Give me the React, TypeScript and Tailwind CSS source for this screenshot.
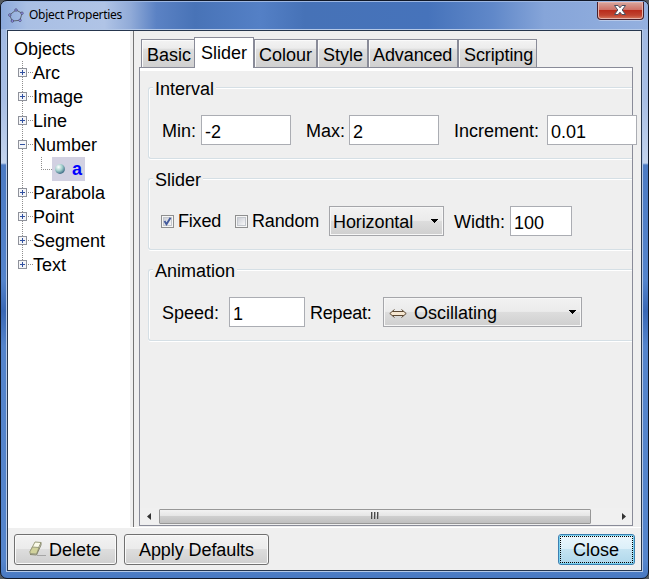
import React from "react";

type TreeItem = { name: string; open?: boolean };

const treeTop: TreeItem[] = [
  { name: "Arc" },
  { name: "Image" },
  { name: "Line" },
  { name: "Number", open: true },
];
const treeBottom: TreeItem[] = [
  { name: "Parabola" },
  { name: "Point" },
  { name: "Segment" },
  { name: "Text" },
];

function TreeLines({ open, last, nested }: { open?: boolean; last?: boolean; nested?: boolean }) {
  return (
    <svg width={nested ? 43 : 24} height="24" className="shrink-0" shapeRendering="crispEdges">
      <path d={last ? "M13.5 0V12" : "M13.5 0V24"} stroke="#8e8e8e" strokeDasharray="1 1" />
      {nested ? (
        <path d="M32.5 0V12.5H43" fill="none" stroke="#8e8e8e" strokeDasharray="1 1" />
      ) : (
        <>
          <path d="M19 11.5H24" stroke="#8e8e8e" strokeDasharray="1 1" />
          <rect x="9.5" y="7.5" width="8" height="8" rx="1" fill="#f4f5f8" stroke="#8f929b" />
          <path d="M11 11.5H16" stroke="#3050a0" />
          {!open && <path d="M13.5 9V14" stroke="#3050a0" />}
        </>
      )}
    </svg>
  );
}

function TreeRow({ item, last }: { item: TreeItem; last?: boolean }) {
  return (
    <div className="flex h-6">
      <TreeLines open={item.open} last={last} />
      <span>{item.name}</span>
    </div>
  );
}

function Tab({ label, className }: { label: string; className: string }) {
  return (
    <div
      className={`h-[28px] shrink-0 border border-b-0 border-[#898b98] bg-[linear-gradient(#f3f3f3_0%,#ececec_30%,#dedede_35%,#d0d0d0_100%)] leading-[30px] shadow-[inset_1px_1px_0_#fafafa] ${className}`}
    >
      {label}
    </div>
  );
}

function Group({ title, className, children }: { title: string; className: string; children: React.ReactNode }) {
  return (
    <section
      className={`ml-[8px] h-[72px] rounded-l-[3px] border border-r-0 border-[#d5dfe5] shadow-[inset_1px_1px_0_#fff,0_1px_0_#fff] ${className}`}
    >
      <div className="-mt-[12px] ml-[4px] h-6 w-fit bg-[#efefef] px-[2px] leading-[26px]">{title}</div>
      <div className="mt-[15px] flex h-[30px] items-center pl-px">{children}</div>
    </section>
  );
}

function Field({ value, className }: { value: string; className: string }) {
  return (
    <div className={`h-[30px] shrink-0 border border-[#abadb3] bg-white pl-[3px] leading-[32px] ${className}`}>
      {value}
    </div>
  );
}

function Label({ children, className }: { children: string; className: string }) {
  return <span className={`h-[30px] shrink-0 ${className}`}>{children}</span>;
}

function Checkbox({ checked }: { checked?: boolean }) {
  return (
    <svg width="13" height="13" className="shrink-0">
      <defs>
        <linearGradient id="check-fill" x1="0" y1="0" x2="1" y2="1">
          <stop offset="0" stopColor="#c9ccd4" />
          <stop offset="1" stopColor="#fafafa" />
        </linearGradient>
      </defs>
      <rect x=".5" y=".5" width="12" height="12" fill="#f6f6f6" stroke="#8e8f8f" />
      <rect x="2.5" y="2.5" width="8" height="8" fill="url(#check-fill)" stroke="#c3c7cd" />
      {checked && <path d="M3.5 6L5.5 9.3L9.5 2.8" fill="none" stroke="#435a9c" strokeWidth="1.9" />}
    </svg>
  );
}

function Combo({ children, className }: { children: React.ReactNode; className: string }) {
  return (
    <div
      className={`flex h-[30px] shrink-0 items-center border border-[#a5a6aa] bg-[linear-gradient(#f2f2f2_0%,#ebebeb_48%,#dddddd_50%,#cfcfcf_100%)] pt-[2px] pr-[5px] leading-[26px] shadow-[inset_0_0_0_1px_#f7f7f7] ${className}`}
    >
      {children}
      <svg width="7" height="4" className="-mt-[2px] ml-auto" shapeRendering="crispEdges">
        <path d="M0 0H7L3.5 4Z" fill="#000" />
      </svg>
    </div>
  );
}

function Button({ children, className }: { children: React.ReactNode; className: string }) {
  return (
    <button
      className={`flex h-[31px] items-center rounded-[3px] border border-[#707070] bg-[linear-gradient(#f3f3f3_0%,#ebebeb_48%,#dddddd_50%,#cfcfcf_100%)] pt-[2px] leading-[27px] shadow-[inset_0_0_0_1px_#fafafa] ${className}`}
    >
      {children}
    </button>
  );
}

function TitleBar() {
  return (
    <header className="flex h-[27px] bg-[linear-gradient(90deg,#8ba9dc_0%,#a9bfe4_4%,#b0c4e6_16%,#91abd8_20%,#5b82c4_24%,#4873b7_30%,#5480c6_40%,#4672b7_47%,#4673bb_66%,#6088c9_76%,#86a5d9_84%,#94b0df_100%)]">
      <svg width="17" height="17" viewBox="0 0 17 17" className="mt-[5px] ml-[7px] shrink-0">
        <path d="M8 3L14 6.2L12 13.3L4.3 14L1.5 8Z" fill="none" stroke="#555b68" strokeWidth=".9" />
        {[[8, 3], [14, 6.2], [12, 13.3], [4.3, 14], [1.8, 8]].map(([x, y]) => (
          <circle key={x} cx={x} cy={y} r="1.25" fill="#9b9bff" stroke="#34364e" strokeWidth=".6" />
        ))}
      </svg>
      <h1 className="ml-[4px] font-['Noto_Sans',sans-serif] text-[12px] leading-[26px] tracking-[-0.3px]">
        Object Properties
      </h1>
      <button className="mr-[4px] ml-auto flex h-[18px] w-[47px] items-center justify-center rounded-b-[4px] border border-t-0 border-[#47202b] bg-[linear-gradient(#d8a79e_0%,#cf7267_45%,#b92c1c_50%,#c04330_78%,#d77b5f_100%)] shadow-[inset_0_0_0_1px_#e6b2aa,0_1px_0_#b8c9e9]">
        <svg width="12" height="10" viewBox="0 0 12 10" className="-translate-x-px -translate-y-px">
          <path
            d="M.5 .5H4.1L6 2.8L7.9 .5H11.5L8.2 5L11.5 9.5H7.9L6 7.2L4.1 9.5H.5L3.8 5Z"
            fill="#fff"
            stroke="#484f60"
          />
        </svg>
      </button>
    </header>
  );
}

export default function App() {
  return (
    <div className="h-[579px] w-[649px] overflow-hidden bg-[#53595f] font-['Liberation_Sans',Arial,sans-serif] text-[18px] leading-6 text-black">
      <div className="h-[579px] w-[649px] overflow-hidden rounded-[7px] border border-[#101828] bg-[linear-gradient(#9db7e2_0px,#a9bfe5_100px,#c4d4ed_162px,#4d7bc3_164px,#5484cc_280px,#3a68b5_310px,#5484cc_345px,#5585cc_560px,#4777c0_579px)] pt-px">
        <TitleBar />
        <div className="mx-[5px] h-[543px] border border-[#b4c8e7]">
          <main className="flex h-full flex-col border border-[#26364e] bg-[#efefef]">
            <div className="flex h-[497px] border-b border-white">
              <aside className="flex w-[122px] shrink-0 flex-col bg-white pt-[6px] pl-px">
                <div className="pl-[5px]">Objects</div>
                {treeTop.map((item) => (
                  <TreeRow key={item.name} item={item} />
                ))}
                <div className="flex h-6">
                  <TreeLines nested />
                  <div className="flex h-6 w-[33px] items-center bg-[#d2d1e2] pl-[3px] font-bold text-[#0000ff]">
                    <svg width="10" height="10" className="-mt-px shrink-0">
                      <defs>
                        <radialGradient id="point" cx="35%" cy="30%" r="70%">
                          <stop offset="0" stopColor="#fff" />
                          <stop offset=".55" stopColor="#a3d0cd" />
                          <stop offset="1" stopColor="#46738b" />
                        </radialGradient>
                      </defs>
                      <circle cx="5" cy="5" r="4.9" fill="url(#point)" />
                    </svg>
                    <span className="ml-[7px] leading-[26px]">a</span>
                  </div>
                </div>
                {treeBottom.map((item) => (
                  <TreeRow key={item.name} item={item} last={item.name === "Text"} />
                ))}
              </aside>
              <div className="w-[4px] shrink-0 border-r border-[#747474] bg-[#efefef]" />
              <div className="flex w-[501px] shrink-0 flex-col pt-[6px] pl-[5px]">
                <nav className="flex h-[30px] items-end pl-[2px]">
                  <Tab label="Basic" className="w-[54px] pl-[5px]" />
                  <div className="z-10 -mb-px -ml-px h-[31px] w-[60px] shrink-0 border border-b-0 border-[#898b98] bg-white pl-[6px] leading-[30px]">
                    Slider
                  </div>
                  <Tab label="Colour" className="w-[63px] pl-[4px]" />
                  <Tab label="Style" className="w-[51px] pl-[5px]" />
                  <Tab label="Advanced" className="w-[90px] pl-[4px] tracking-[-0.1px]" />
                  <Tab label="Scripting" className="w-[79px] pl-[5px] tracking-[-0.1px]" />
                </nav>
                <div className="flex h-[459px] w-[494px] flex-col border border-[#898b98]">
                  <div className="h-[3px] shrink-0 bg-white" />
                  <Group title="Interval" className="mt-[16px]">
                    <Label className="ml-[12px] w-[39px] leading-[32px]">Min:</Label>
                    <Field value="-2" className="w-[90px]" />
                    <Label className="ml-[15px] w-[43px] leading-[32px]">Max:</Label>
                    <Field value="2" className="w-[90px]" />
                    <Label className="ml-[15px] w-[93px] leading-[32px]">Increment:</Label>
                    <Field value="0.01" className="w-[90px]" />
                  </Group>
                  <Group title="Slider" className="mt-[19px]">
                    <div className="w-[11px] shrink-0" />
                    <Checkbox checked />
                    <Label className="ml-[4px] w-[57px] leading-[30px] tracking-[-0.2px]">Fixed</Label>
                    <Checkbox />
                    <Label className="ml-[4px] w-[77px] leading-[30px] tracking-[-0.15px]">Random</Label>
                    <Combo className="w-[115px] pl-[3px] tracking-[-0.1px]">Horizontal</Combo>
                    <Label className="ml-[10px] w-[56px] leading-[32px]">Width:</Label>
                    <Field value="100" className="w-[62px]" />
                  </Group>
                  <Group title="Animation" className="mt-[19px]">
                    <Label className="ml-[12px] w-[67px] leading-[32px]">Speed:</Label>
                    <Field value="1" className="w-[76px]" />
                    <Label className="ml-[5px] w-[73px] leading-[32px] tracking-[-0.2px]">Repeat:</Label>
                    <Combo className="w-[199px] pl-[5px]">
                      <svg width="18" height="9" viewBox="0 0 18 9">
                        <path d="M5 .7L.8 4.5L5 8.3V6.5H13V8.3L17.2 4.5L13 .7V2.5H5Z" fill="#f5e6d0" />
                        <path
                          d="M3.5 2.5H14.5M3.5 6.5H14.5M5.5 .5L.8 4.5L5.5 8.5M12.5 .5L17.2 4.5L12.5 8.5"
                          fill="none"
                          stroke="#4a3520"
                          strokeWidth=".9"
                        />
                      </svg>
                      <span className="ml-[7px]">Oscillating</span>
                    </Combo>
                  </Group>
                  <div className="mt-auto mb-px flex h-[16px] items-center bg-[#f0f0f0]">
                    <svg width="19" height="9">
                      <path d="M11 1V8L7 4.5Z" fill="#333" />
                    </svg>
                    <div className="flex h-[15px] w-[432px] items-center justify-center rounded-[1px] border border-[#979797] bg-[linear-gradient(#f2f2f2_0%,#e5e5e5_46%,#cecece_50%,#c0c0c0_100%)]">
                      <svg width="9" height="7" className="-mt-[2px]" shapeRendering="crispEdges">
                        <path d="M.5 0V7M3.5 0V7M6.5 0V7" stroke="#4a4a4a" />
                        <path d="M1.5 0V7M4.5 0V7M7.5 0V7" stroke="#aaa" />
                      </svg>
                    </div>
                    <svg width="41" height="9">
                      <path d="M31 1V8L35 4.5Z" fill="#333" />
                    </svg>
                  </div>
                </div>
              </div>
            </div>
            <footer className="flex pt-[6px] pl-[6px]">
              <Button className="w-[103px] pl-[14px]">
                <svg width="17" height="16" viewBox="0 0 17 16" className="-mt-[3px]">
                  <path d="M6 1L12 1.5L7.5 11L1 10.5Z" fill="#fbfbea" stroke="#9b9d7c" />
                  <path d="M3.5 6L10 6.5L7.5 13L1 12.5V10.5Z" fill="#d1d29c" stroke="#9b9d7c" />
                  <path d="M12 1.5L12 4L7.5 14L1 13.5" fill="none" stroke="#85866b" />
                  <path d="M8 14.5H17" stroke="#a5a5a5" />
                </svg>
                <span className="ml-[3px]">Delete</span>
              </Button>
              <Button className="ml-[7px] w-[145px] pl-[14px] tracking-[-0.08px]">Apply Defaults</Button>
              <button className="mr-[6px] ml-auto h-[31px] w-[77px] rounded-[3px] border border-[#3c7fb1] bg-[linear-gradient(#ebf6fc_0%,#dceff9_48%,#c4e3f2_50%,#afd7eb_100%)] p-px shadow-[inset_0_0_0_1px_#7cd3f0]">
                <span className="block h-[27px] border border-dotted border-black pr-px leading-[27px]">Close</span>
              </button>
            </footer>
          </main>
        </div>
      </div>
    </div>
  );
}
